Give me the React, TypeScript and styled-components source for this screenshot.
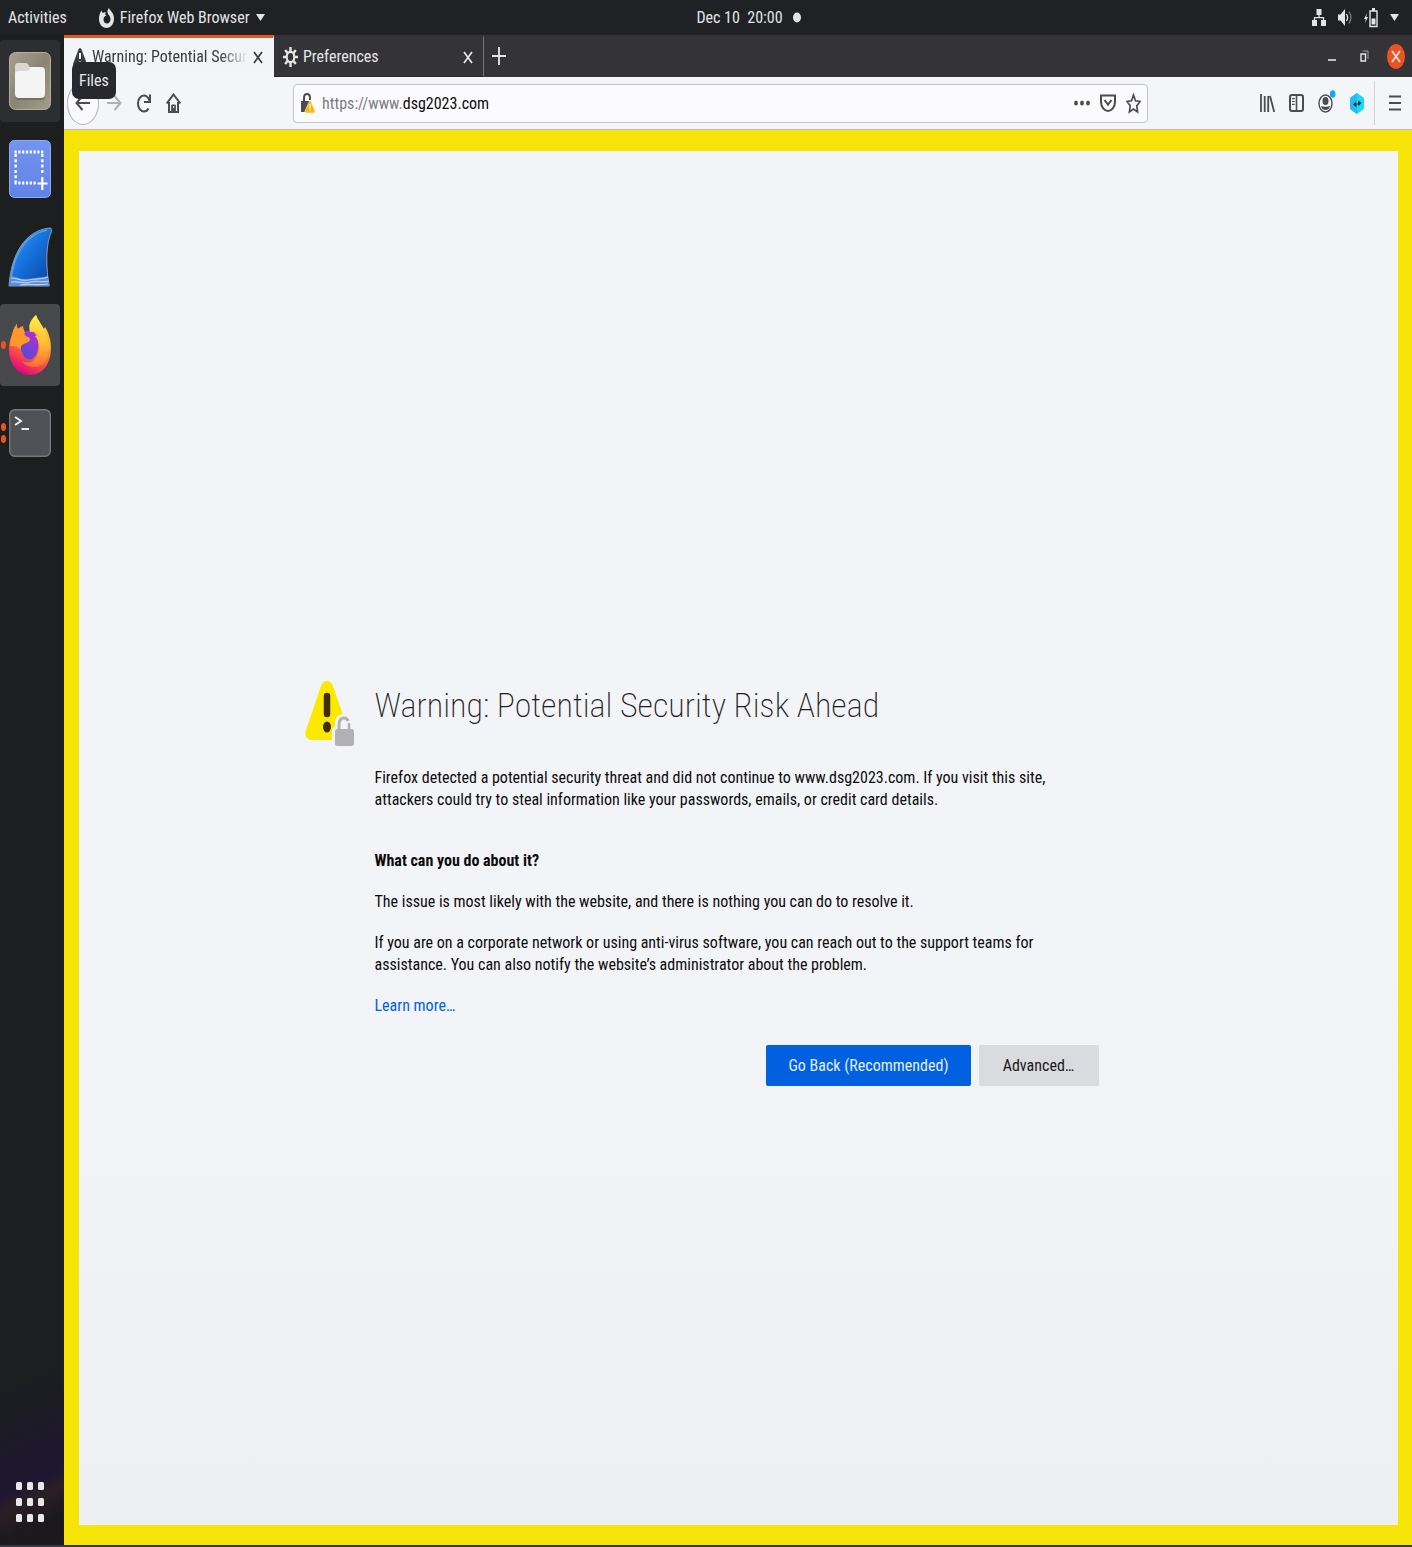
import React from "react";
import styled, { createGlobalStyle } from "styled-components";

const UI_FONT = `"Ubuntu Condensed", "Roboto Condensed", "Open Sans Condensed", "Liberation Sans Narrow", "Noto Sans", sans-serif`;

const GlobalStyle = createGlobalStyle`
  * { box-sizing: border-box; }
  body { margin: 0; background: #1d1f22; }
  button, input { font: inherit; color: inherit; }
  p, h1, h2 { margin: 0; }
`;

const Desktop = styled.div`
  min-height: 100vh;
  display: grid;
  grid-template: 35px 1fr / 64px minmax(0, 1fr);
  font: 16px/22px ${UI_FONT};
  color: #0c0c0d;
  border-bottom: 2px solid #333a48;
`;

const PlainButton = styled.button`
  display: flex;
  align-items: center;
  justify-content: center;
  gap: 6px;
  padding: 0;
  border: 0;
  background: none;
  flex: none;
`;

/* ---------- system bar ---------- */

const SystemBar = styled.header`
  grid-column: 1 / -1;
  display: grid;
  grid-template-columns: 1fr auto 1fr;
  align-items: center;
  padding: 0 13px 0 8px;
  background: #1f2125;
  color: #e4e4e6;
`;

const BarStart = styled.div`
  display: flex;
  gap: 32px;
`;

const Clock = styled(PlainButton)`
  gap: 10px;
  padding-left: 90px;
  white-space: pre;
`;

const BarEnd = styled.div`
  display: flex;
  align-items: center;
  justify-content: flex-end;
  gap: 12px;
`;

/* ---------- dock ---------- */

const Dock = styled.nav`
  position: relative;
  display: flex;
  flex-direction: column;
  gap: 6px;
  padding: 5px 4px 22px 0;
  background: linear-gradient(155deg, #1c1e20 0%, #1c1e20 88%, #1e1730 95%, #2b1f25 96%, #1b191c 98%);
`;

const DockItem = styled(PlainButton)<{ $tone?: string }>`
  position: relative;
  height: 82px;
  border-radius: 4px;
  background: ${(p) => p.$tone ?? "transparent"};
`;

const RunningDots = styled.span`
  position: absolute;
  left: 1px;
  top: 0;
  bottom: 0;
  display: flex;
  flex-direction: column;
  justify-content: center;
  gap: 4px;
`;

const RunningDot = styled.span`
  width: 5px;
  height: 8px;
  border-radius: 50%;
  background: #e95420;
`;

const AppsButton = styled(PlainButton)`
  margin-top: auto;
`;

const Tooltip = styled.span`
  position: absolute;
  z-index: 2;
  left: 72px;
  top: 27px;
  padding: 8px 7px 7px;
  border-radius: 7px;
  background: #28292c;
  color: #e8e8ea;
`;

/* ---------- browser window ---------- */

const Window = styled.div`
  display: flex;
  flex-direction: column;
  min-width: 0;
`;

const TabStrip = styled.div`
  display: flex;
  height: 42px;
  padding-right: 7px;
  background: #343438;
  color: #e6e6e8;
`;

const Tab = styled.div<{ $active?: boolean }>`
  display: flex;
  align-items: center;
  gap: 5px;
  width: 210px;
  padding: 0 10px 0 9px;
  border-top: 3px solid ${(p) => (p.$active ? "#e95420" : "transparent")};
  border-bottom: 1px solid ${(p) => (p.$active ? "#f3f4f7" : "#252528")};
  border-right: 1px solid ${(p) => (p.$active ? "#f3f4f7" : "#747478")};
  background: ${(p) => (p.$active ? "#f3f4f7" : "#343438")};
  color: ${(p) => (p.$active ? "#3b3b3f" : "#e6e6e8")};
`;

const TabTitle = styled.button<{ $fade?: boolean }>`
  flex: 1;
  min-width: 0;
  padding: 0;
  border: 0;
  background: none;
  text-align: left;
  white-space: nowrap;
  mask-image: ${(p) => (p.$fade ? "linear-gradient(to right, #000 82%, transparent)" : "none")};
`;

const NewTab = styled(PlainButton)`
  width: 30px;
`;

const WindowControls = styled.div`
  display: flex;
  align-items: center;
  gap: 24px;
  margin-left: auto;
`;

const CloseWindow = styled(PlainButton)`
  width: 18px;
  height: 25px;
  margin-left: -6px;
  border-radius: 50%;
  background: #e95420;
`;

const Toolbar = styled.div`
  display: flex;
  align-items: center;
  height: 53px;
  padding: 0 11px 0 3px;
  background: #f4f5f8;
  border-bottom: 1px solid #bdbdc4;
  color: #4c4c50;
`;

const BackButton = styled(PlainButton)`
  width: 32px;
  height: 43px;
  border: 1px solid #b1b1b6;
  border-radius: 50%;
  background: #fafafc;
`;

const NavButtons = styled.div`
  display: flex;
  align-items: center;
  gap: 14px;
  padding-left: 7px;
`;

const UrlBar = styled.div`
  display: flex;
  flex: 1;
  align-items: center;
  min-width: 0;
  height: 39px;
  margin: 0 112px;
  padding: 0 6px 0 7px;
  border: 1px solid #c3c3c8;
  border-radius: 4px;
  background: #fbfbfe;
`;

const UrlPrefix = styled.label`
  padding: 2px 0 0 7px;
  color: #7c7c80;
`;

const UrlInput = styled.input`
  flex: 1;
  min-width: 0;
  padding: 2px 0 0;
  border: 0;
  outline: 0;
  background: none;
  color: #0c0c0d;
`;

const UrlActions = styled.div`
  display: flex;
  align-items: center;
  gap: 10px;
`;

const ToolbarEnd = styled.div`
  display: flex;
  align-items: center;
  gap: 14px;
`;

const MenuButton = styled(PlainButton)`
  height: 44px;
  margin-left: -4px;
  padding-left: 14px;
  border-left: 1px solid #d3d3d8;
`;

/* ---------- warning page ---------- */

const Page = styled.main`
  flex: 1;
  display: grid;
  grid-template-columns: minmax(60px, 1fr) minmax(0, 724px) minmax(0, 1fr);
  align-content: center;
  padding: 91px 4px 0 0;
  border: solid #f7e408;
  border-width: 21px 14px 20px 15px;
  background: linear-gradient(#f3f4f8 60%, #eeeff3);
`;

const WarningMark = styled.div`
  justify-self: end;
  padding-right: 21px;
`;

const Title = styled.h1`
  margin-bottom: 38px;
  font-weight: 200;
  font-size: 34px;
  line-height: 48px;
  color: #1d1d20;
`;

const Copy = styled.section`
  display: flex;
  flex-direction: column;
  gap: 19px;
`;

const Lead = styled.p`
  margin-bottom: 20px;
`;

const Subtitle = styled.h2`
  font-size: 16px;
  line-height: 22px;
  font-weight: 700;
`;

const LearnMore = styled.a`
  color: #0060df;
  text-decoration: none;
`;

const Actions = styled.div`
  display: flex;
  justify-content: flex-end;
  gap: 8px;
  margin-top: 28px;
`;

const ActionButton = styled.button<{ $primary?: boolean }>`
  min-width: 120px;
  height: 41px;
  padding: 0 22px;
  border: 0;
  border-radius: 2px;
  background: ${(p) => (p.$primary ? "#0060df" : "#dadbdf")};
  color: ${(p) => (p.$primary ? "#e2edff" : "#19191c")};
`;

/* ---------- drawings ---------- */

type IconProps = { w: number; h: number; children: React.ReactNode };

const Icon = ({ w, h, children }: IconProps) => (
  <svg width={w} height={h} viewBox={`0 0 ${w} ${h}`} fill="none" stroke="currentColor" strokeWidth="2" aria-hidden="true">
    {children}
  </svg>
);

const Caret = () => (
  <Icon w={9} h={7}>
    <path d="M0 0h9L4.500 7z" fill="currentColor" stroke="none" />
  </Icon>
);

const Cross = () => (
  <Icon w={10} h={13}>
    <path d="M1 1l8 11M9 1L1 12" strokeWidth="1.700" />
  </Icon>
);

const FirefoxGlyph = () => (
  <Icon w={15} h={20}>
    <path
      d="M2.500 2.500c.2 1.300.7 2 1.500 2.500 1-.6 2-.8 3-.5C5.800 5.500 6 7 7.500 7.500 6 8 4.500 9 4.500 11.500c0 2.500 1.500 4 3.500 4s3.500-2 3.500-4.500C11.500 8 9 7 8.500 4.500 8.200 2.800 9 1 10 0c.5 2.500 5 4 5 10.500C15 16 11.800 20 7.500 20S0 16 0 11c0-4 1-6 2.500-8.500z"
      fill="currentColor"
      stroke="none"
    />
  </Icon>
);

const NetworkIcon = () => (
  <Icon w={14} h={17}>
    <path d="M4.500 0h5v6h-5zM0 11h5v6H0zM9 11h5v6H9z" fill="currentColor" stroke="none" />
    <path d="M7 5v4M2.500 12V8.700h9V12" strokeWidth="1.300" />
  </Icon>
);

const VolumeIcon = () => (
  <Icon w={14} h={17}>
    <path d="M0 5.500h2.500L7 0v17l-4.500-5.500H0z" fill="currentColor" stroke="none" />
    <path d="M8.500 5c1.300 2 1.300 5 0 7" strokeWidth="1.300" />
    <path d="M11 2.500c2.600 3.500 2.600 8.500 0 12" strokeWidth="1.200" opacity=".5" />
  </Icon>
);

const BatteryIcon = () => (
  <Icon w={14} h={20}>
    <path d="M3 5L0 11h1.800L1 15l3-6H2.200z" fill="currentColor" stroke="none" />
    <path d="M6 3h7v15.500H6z" strokeWidth="1.400" />
    <path d="M8 0h3v3H8zM7.500 10.500h4v6h-4z" fill="currentColor" stroke="none" />
  </Icon>
);

const FilesIcon = () => (
  <svg width="42" height="58" viewBox="0 0 42 58" aria-hidden="true">
    <defs>
      <linearGradient id="files" x1="0" y1="0" x2="1" y2="1">
        <stop offset="0" stopColor="#a7a08e" />
        <stop offset=".5" stopColor="#8a8473" />
        <stop offset="1" stopColor="#a39c8a" />
      </linearGradient>
    </defs>
    <rect x=".5" y=".5" width="41" height="57" rx="6" fill="url(#files)" stroke="#b5ad99" />
    <rect x="6" y="17" width="30" height="31" rx="4" fill="#75705f" />
    <rect x="6" y="15" width="30" height="31" rx="4" fill="#f4f4f4" />
    <path d="M6 22v-8q0-3 3-3h8q2 0 3 3l1 2q-1 3-4 3H10q-4 0-4 3z" fill="#d9d7d0" />
  </svg>
);

const ScreenshotIcon = () => (
  <svg width="42" height="58" viewBox="0 0 42 58" aria-hidden="true">
    <defs>
      <linearGradient id="shot" x1="0" y1="0" x2="0" y2="1">
        <stop offset="0" stopColor="#7394f0" />
        <stop offset="1" stopColor="#6283e6" />
      </linearGradient>
    </defs>
    <rect x=".5" y=".5" width="41" height="57" rx="5" fill="url(#shot)" stroke="#8eaaf5" />
    <path d="M5.500 12h29M5.500 43h22" stroke="#fff" strokeWidth="3" strokeDasharray="2.200 1.600" />
    <path d="M6.700 14v28M33.300 14v21" stroke="#fff" strokeWidth="2.400" strokeDasharray="3 2.300" />
    <path d="M33.300 37v13M28.500 43.500h10" stroke="#fff" strokeWidth="2.200" />
  </svg>
);

const WiresharkIcon = () => (
  <svg width="44" height="60" viewBox="0 0 44 60" aria-hidden="true">
    <defs>
      <linearGradient id="fin" x1="0" y1="0" x2="1" y2="1">
        <stop offset="0" stopColor="#3c9bee" />
        <stop offset=".5" stopColor="#156fdb" />
        <stop offset="1" stopColor="#0a3f9e" />
      </linearGradient>
    </defs>
    <path d="M1 59C3 28 17 3 42 1c2 0 2 2 1 5-4 9-6 27-2 53z" fill="url(#fin)" stroke="#8d9cae" strokeWidth="1" />
    <path d="M3 52C6 27 18 7 39 3" fill="none" stroke="#68b5f5" strokeWidth="1.500" opacity=".7" />
    <path d="M1 59l1-9c6-2 9 3 16 2s13-1 22-3l2 10z" fill="#5c8fd8" />
    <path d="M3 51c8 0 10 4 18 2s12 0 19-3M3 55c9-1 14 2 20 0s10 1 18-1M12 58c8-2 16 1 28-1" fill="none" stroke="#b9d0ee" strokeWidth="1.200" />
  </svg>
);

const FirefoxIcon = () => (
  <svg width="42" height="60" viewBox="0 0 42 60" aria-hidden="true">
    <defs>
      <linearGradient id="fxBody" x1=".8" y1="0" x2=".4" y2="1">
        <stop offset="0" stopColor="#ffe14d" />
        <stop offset=".35" stopColor="#ffa836" />
        <stop offset=".68" stopColor="#ff5a3c" />
        <stop offset="1" stopColor="#e1087e" />
      </linearGradient>
      <linearGradient id="fxGlobe" x1=".8" y1="0" x2=".3" y2="1">
        <stop offset="0" stopColor="#b62be0" />
        <stop offset="1" stopColor="#5150cc" />
      </linearGradient>
      <linearGradient id="fxTail" x1="0" y1="0" x2="0" y2="1">
        <stop offset="0" stopColor="#fff04a" />
        <stop offset=".55" stopColor="#ffbc33" />
        <stop offset="1" stopColor="#ff6a36" />
      </linearGradient>
    </defs>
    <path
      d="M3 20c1-4 2-8 5-11 0 3 0 4 1 5 1-1 3-2 5-3 0 3 1 4 2 6 1 0 3 0 5-1 0-7 2-12 6-16 2 6 5 9 8 14l1-2c4 6 6 14 6 21 0 16-9 27-21 27S0 49 0 34c0-5 1-10 3-14z"
      fill="url(#fxBody)"
    />
    <ellipse cx="20.500" cy="30" rx="9" ry="14.500" fill="url(#fxGlobe)" />
    <path
      d="M27 0c-6 5-8 11-6 17 5-1 8 1 9 5-2-1-3-1-4-1 5 5 6 16 1 22-4 5-9 6-14 3 5 7 16 8 22 2 5-5 7-14 5-21-1-5-3-8-4-14l-1 3C34 10 29 6 27 0z"
      fill="url(#fxTail)"
    />
    <path
      d="M3 20c1-4 2-8 5-11 0 3 0 4 1 5 1-1 3-2 5-3 0 4 1 6 2 9 1 2 5 2 5 4 0 3-4 4-6 5-3 1-4 3-3 6-3-4-7-4-11-4 0-4 1-8 2-11z"
      fill="#ff972b"
    />
  </svg>
);

const TerminalIcon = () => (
  <svg width="42" height="48" viewBox="0 0 42 48" fill="none" aria-hidden="true">
    <rect x=".7" y=".7" width="40.600" height="46.600" rx="5" fill="#505156" stroke="#77787c" strokeWidth="1.400" />
    <path d="M6 8l6 4-6 4M12.500 20H20" stroke="#eeeeef" strokeWidth="2" />
  </svg>
);

const AppsIcon = () => (
  <svg width="30" height="41" viewBox="0 0 30 41" fill="#e8e8ea" aria-hidden="true">
    {[0, 16, 32].map((y) =>
      [1, 12, 23].map((x) => <rect key={`${x}-${y}`} x={x} y={y} width="6" height="8" rx="1.500" />)
    )}
  </svg>
);

const AlertIcon = () => (
  <Icon w={14} h={18}>
    <path d="M7 0q1 0 1.500 1.500L14 16q0 2-1.500 2h-11Q0 18 0 16L5.500 1.500Q6 0 7 0z" fill="currentColor" stroke="none" />
    <path d="M7 5v6M7 13.500V16" stroke="#f3f4f7" />
  </Icon>
);

const GearIcon = () => (
  <Icon w={15} h={20}>
    <path d="M7.500 0v20M0 10h15M2.200 3l10.600 14M12.800 3L2.200 17" strokeWidth="2.400" />
    <ellipse cx="7.500" cy="10" rx="3.800" ry="5.200" fill="#343438" strokeWidth="2.200" />
  </Icon>
);

const PlusIcon = () => (
  <Icon w={14} h={18}>
    <path d="M7 0v18M0 9h14" strokeWidth="1.800" />
  </Icon>
);

const MinimizeIcon = () => (
  <Icon w={8} h={13}>
    <path d="M0 10h8" strokeWidth="1.600" />
  </Icon>
);

const RestoreIcon = () => (
  <Icon w={9} h={12}>
    <path d="M1 4h4.500v7H1z" strokeWidth="1.400" />
    <path d="M2.500 1H8v8" strokeWidth="1" opacity=".6" />
  </Icon>
);

const ArrowIcon = ({ forward }: { forward?: boolean }) => (
  <Icon w={16} h={18}>
    {forward ? (
      <path d="M1 9h13M8.500 2l6 7-6 7" opacity=".4" />
    ) : (
      <path d="M2 9h13M7.500 2l-6 7 6 7" />
    )}
  </Icon>
);

const ReloadIcon = () => (
  <Icon w={16} h={19}>
    <path d="M12.500 14.500c-1 2-2.500 3-4.500 3-3.500 0-6-3.500-6-8s2.500-8 6-8c2.200 0 4 1.500 5.500 5" />
    <path d="M14 .5V8H8" />
  </Icon>
);

const HomeIcon = () => (
  <Icon w={15} h={20}>
    <path d="M.7 10.500L7.500 1.500l6.800 9M3 9v10h9V9" />
    <path d="M5.700 19v-7h3.600v7" fill="currentColor" strokeWidth="1" />
    <path d="M7.700 13v2" stroke="#fff" strokeWidth="1" />
  </Icon>
);

const InsecureIcon = () => (
  <Icon w={14} h={20}>
    <path d="M3 10V5q0-4 3-4t3 4v2" strokeWidth="2" />
    <path d="M0 8h10v11H0z" fill="currentColor" stroke="none" />
    <path d="M9 8q.8 0 1.200 1L14 18q0 2-1.500 2H5q-1.500 0-1-2l4-9q.3-1 1-1z" fill="#ffb400" stroke="#fbfbfe" strokeWidth=".6" />
    <path d="M9 11v4.500M9 16.500V18" stroke="#fff" strokeWidth="1.300" />
  </Icon>
);

const DotsIcon = () => (
  <Icon w={16} h={6}>
    {[2, 8, 14].map((x) => (
      <ellipse key={x} cx={x} cy="3" rx="1.900" ry="2.500" fill="currentColor" stroke="none" />
    ))}
  </Icon>
);

const PocketIcon = () => (
  <Icon w={16} h={18}>
    <path d="M1 1.500h14V8c0 5-3.500 9-7 9s-7-4-7-9z" />
    <path d="M4.500 6L8 10.500 11.500 6" />
  </Icon>
);

const StarIcon = () => (
  <Icon w={15} h={21}>
    <path d="M7.500 2l2 5.800 4.600.6-3.300 4.400.8 6.200-4.100-3-4.100 3 .8-6.200L.9 8.400l4.600-.6z" strokeWidth="1.700" />
  </Icon>
);

const LibraryIcon = () => (
  <Icon w={15} h={18}>
    <path d="M1 0v18M4.700 2v16M8.200 2v16M10 2l4.200 16" strokeWidth="1.800" />
  </Icon>
);

const SidebarIcon = () => (
  <Icon w={15} h={18}>
    <rect x="1" y="1" width="13" height="16" rx="2" />
    <path d="M7.500 1v16" strokeWidth="1.600" />
    <path d="M3 4.700h2.700M3 7.500h2.700M3 10.300h2.700" strokeWidth="1.200" />
  </Icon>
);

const AccountIcon = () => (
  <Icon w={18} h={26}>
    <ellipse cx="7.500" cy="13.500" rx="6.500" ry="8.500" strokeWidth="1.400" />
    <ellipse cx="7.500" cy="11" rx="3" ry="4" fill="currentColor" stroke="none" />
    <path d="M3 16c2 1 7 1 9 0-.6 3-2.500 4-4.500 4S3.600 19 3 16z" fill="currentColor" stroke="none" />
    <ellipse cx="14.700" cy="4" rx="2.800" ry="3.800" fill="#12a8f5" stroke="none" />
  </Icon>
);

const HexIcon = () => (
  <Icon w={14} h={21}>
    <path d="M7 0l7 5v11l-7 5-7-5V5z" fill="#1dd8f6" stroke="none" />
    <path d="M0 5l7-5v21l-7-5z" fill="#24bdf0" stroke="none" />
    <path d="M3 11.500l3-3v2h2V7.500l3.500 2.300-3 3.700v-2H6.500v3z" fill="#2b3a4a" stroke="none" />
  </Icon>
);

const MenuIcon = () => (
  <Icon w={12} h={16}>
    <path d="M0 1.500h12M0 8h12M0 14.500h12" />
  </Icon>
);

const RiskIcon = () => (
  <svg width="49" height="66" viewBox="0 0 49 66" aria-hidden="true">
    <path d="M22 0c3 0 5 2 6 5l12 35v19H7c-5 0-8-5-6-10L16 5c1-3 3-5 6-5z" fill="#fce903" />
    <path d="M22 15v18" stroke="#3e2e02" strokeWidth="6.500" strokeLinecap="round" />
    <ellipse cx="22" cy="46" rx="4" ry="5.500" fill="#3e2e02" />
    <path d="M27 66V50q0-4 3-4v-3q0-10 9-10 3 0 5 1v32z" fill="#f3f4f8" />
    <path d="M34 50v-6q0-7 5-7 3 0 4 3" fill="none" stroke="#b1b1b5" strokeWidth="3" />
    <path d="M44 42v7" stroke="#b1b1b5" strokeWidth="2.500" />
    <rect x="30" y="48" width="19" height="17" rx="2.500" fill="#b1b1b5" />
  </svg>
);

const StatusDot = () => (
  <Icon w={8} h={11}>
    <ellipse cx="4" cy="5.500" rx="4" ry="5" fill="currentColor" stroke="none" />
  </Icon>
);

/* ---------- screen ---------- */

export default function App() {
  return (
    <Desktop>
      <GlobalStyle />
      <SystemBar>
        <BarStart>
          <PlainButton>Activities</PlainButton>
          <PlainButton>
            <FirefoxGlyph />
            Firefox Web Browser
            <Caret />
          </PlainButton>
        </BarStart>
        <Clock>
          {"Dec 10  20:00"}
          <StatusDot />
        </Clock>
        <BarEnd>
          <NetworkIcon />
          <VolumeIcon />
          <BatteryIcon />
          <Caret />
        </BarEnd>
      </SystemBar>

      <Dock aria-label="Dock">
        <DockItem $tone="#2d2e31" aria-label="Files">
          <FilesIcon />
        </DockItem>
        <Tooltip role="tooltip">Files</Tooltip>
        <DockItem aria-label="Screenshot">
          <ScreenshotIcon />
        </DockItem>
        <DockItem aria-label="Wireshark">
          <WiresharkIcon />
        </DockItem>
        <DockItem $tone="#47484b" aria-label="Firefox Web Browser">
          <RunningDots>
            <RunningDot />
          </RunningDots>
          <FirefoxIcon />
        </DockItem>
        <DockItem aria-label="Terminal">
          <RunningDots>
            <RunningDot />
            <RunningDot />
          </RunningDots>
          <TerminalIcon />
        </DockItem>
        <AppsButton aria-label="Show Applications">
          <AppsIcon />
        </AppsButton>
      </Dock>

      <Window>
        <TabStrip>
          <Tab $active>
            <AlertIcon />
            <TabTitle $fade>Warning: Potential Secur</TabTitle>
            <PlainButton aria-label="Close tab">
              <Cross />
            </PlainButton>
          </Tab>
          <Tab>
            <GearIcon />
            <TabTitle>Preferences</TabTitle>
            <PlainButton aria-label="Close tab">
              <Cross />
            </PlainButton>
          </Tab>
          <NewTab aria-label="New tab">
            <PlusIcon />
          </NewTab>
          <WindowControls>
            <PlainButton aria-label="Minimize">
              <MinimizeIcon />
            </PlainButton>
            <PlainButton aria-label="Restore">
              <RestoreIcon />
            </PlainButton>
            <CloseWindow aria-label="Close window">
              <Cross />
            </CloseWindow>
          </WindowControls>
        </TabStrip>

        <Toolbar>
          <BackButton aria-label="Back">
            <ArrowIcon />
          </BackButton>
          <NavButtons>
            <PlainButton aria-label="Forward">
              <ArrowIcon forward />
            </PlainButton>
            <PlainButton aria-label="Reload">
              <ReloadIcon />
            </PlainButton>
            <PlainButton aria-label="Home">
              <HomeIcon />
            </PlainButton>
          </NavButtons>
          <UrlBar>
            <InsecureIcon />
            <UrlPrefix htmlFor="address">https://www.</UrlPrefix>
            <UrlInput id="address" type="text" defaultValue="dsg2023.com" />
            <UrlActions>
              <PlainButton aria-label="Page actions">
                <DotsIcon />
              </PlainButton>
              <PlainButton aria-label="Save to Pocket">
                <PocketIcon />
              </PlainButton>
              <PlainButton aria-label="Bookmark this page">
                <StarIcon />
              </PlainButton>
            </UrlActions>
          </UrlBar>
          <ToolbarEnd>
            <PlainButton aria-label="Library">
              <LibraryIcon />
            </PlainButton>
            <PlainButton aria-label="Sidebars">
              <SidebarIcon />
            </PlainButton>
            <PlainButton aria-label="Account">
              <AccountIcon />
            </PlainButton>
            <PlainButton aria-label="Extension">
              <HexIcon />
            </PlainButton>
            <MenuButton aria-label="Open menu">
              <MenuIcon />
            </MenuButton>
          </ToolbarEnd>
        </Toolbar>

        <Page>
          <WarningMark>
            <RiskIcon />
          </WarningMark>
          <div>
            <Title>Warning: Potential Security Risk Ahead</Title>
            <Copy>
              <Lead>
                Firefox detected a potential security threat and did not continue to www.dsg2023.com. If you visit this
                site, attackers could try to steal information like your passwords, emails, or credit card details.
              </Lead>
              <Subtitle>What can you do about it?</Subtitle>
              <p>The issue is most likely with the website, and there is nothing you can do to resolve it.</p>
              <p>
                If you are on a corporate network or using anti-virus software, you can reach out to the support teams
                for assistance. You can also notify the website’s administrator about the problem.
              </p>
              <p>
                <LearnMore href="#learn-more">Learn more…</LearnMore>
              </p>
            </Copy>
            <Actions>
              <ActionButton $primary>Go Back (Recommended)</ActionButton>
              <ActionButton>Advanced…</ActionButton>
            </Actions>
          </div>
        </Page>
      </Window>
    </Desktop>
  );
}
